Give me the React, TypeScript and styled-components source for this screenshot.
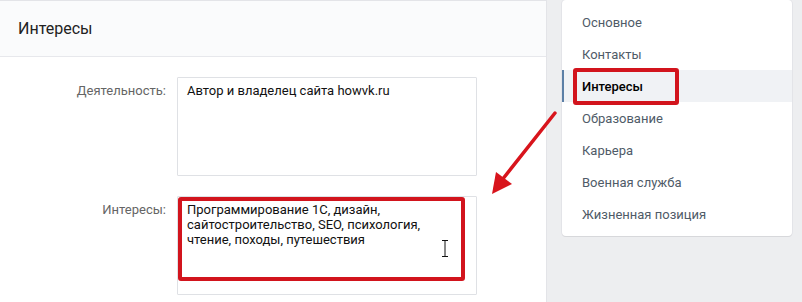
import styled, { createGlobalStyle } from 'styled-components';

const GlobalStyle = createGlobalStyle`
  html, body {
    margin: 0;
    padding: 0;
    background: #edeef0;
    font-family: Roboto, "Open Sans", "Liberation Sans", sans-serif;
    -webkit-font-smoothing: antialiased;
  }
`;

const Page = styled.div`
  position: relative;
  display: flex;
  align-items: flex-start;
  gap: 15px;
  width: 802px;
  height: 302px;
  overflow: hidden;
`;

const Card = styled.div`
  width: 547px;
  height: 302px;
  background: #fff;
  border-top: 1px solid #e3e4e8;
  border-right: 1px solid #e3e4e8;
  box-sizing: border-box;
`;

const Header = styled.div`
  height: 55px;
  display: flex;
  align-items: center;
  padding-left: 18px;
  background: #fafbfc;
  border-bottom: 1px solid #e7e8ec;
  font-size: 16px;
  color: #222;
`;

const Form = styled.div`
  display: flex;
  flex-direction: column;
  gap: 20px;
  padding-top: 20px;
`;

const Row = styled.div`
  display: flex;
  gap: 11px;
`;

const Label = styled.div`
  width: 166px;
  text-align: right;
  padding-top: 6px;
  font-size: 13px;
  color: #656565;
`;

const FieldWrap = styled.div`
  position: relative;
`;

const Field = styled.div`
  width: 300px;
  height: 99px;
  box-sizing: border-box;
  border: 1px solid #dfe1e5;
  border-radius: 1px;
  padding: 5px 9px;
  font-size: 13px;
  line-height: 15px;
  color: #111;
`;

const Highlight = styled.div<{ $w: number; $h: number; $l: number; $t: number }>`
  position: absolute;
  left: ${({ $l }) => $l}px;
  top: ${({ $t }) => $t}px;
  width: ${({ $w }) => $w}px;
  height: ${({ $h }) => $h}px;
  box-sizing: border-box;
  border: 4px solid #d2141d;
  border-radius: 3px;
  pointer-events: none;
`;

const Cursor = styled.svg`
  position: absolute;
  left: 264px;
  top: 44px;
`;

const Menu = styled.div`
  position: relative;
  width: 230px;
  margin-top: 0;
  padding: 6px 0;
  background: #fff;
  border-radius: 4px;
  box-shadow: 0 1px 0 0 #d7d8db, 0 0 0 1px #e3e4e8;
`;

const MenuItem = styled.div<{ $active?: boolean }>`
  height: 32px;
  display: flex;
  align-items: center;
  padding-left: 18px;
  font-size: 13px;
  color: ${({ $active }) => ($active ? '#000' : '#4f5b68')};
  font-weight: ${({ $active }) => ($active ? 500 : 400)};
  background: ${({ $active }) => ($active ? '#f0f2f5' : 'transparent')};
  border-left: 2px solid ${({ $active }) => ($active ? '#5b7fa6' : 'transparent')};
`;

const Arrow = styled.svg`
  position: absolute;
  left: 480px;
  top: 100px;
`;

const items = [
  'Основное',
  'Контакты',
  'Интересы',
  'Образование',
  'Карьера',
  'Военная служба',
  'Жизненная позиция',
];

export default function App() {
  return (
    <>
      <GlobalStyle />
      <Page>
        <Card>
          <Header>Интересы</Header>
          <Form>
            <Row>
              <Label>Деятельность:</Label>
              <Field>Автор и владелец сайта howvk.ru</Field>
            </Row>
            <Row>
              <Label>Интересы:</Label>
              <FieldWrap>
                <Field>
                  Программирование 1С, дизайн, сайтостроительство, SEO, психология, чтение, походы,
                  путешествия
                </Field>
                <Highlight $l={1} $t={1} $w={287} $h={84} />
                <Cursor width="8" height="17" viewBox="0 0 8 17">
                  <path d="M1 0.5h6M4 0.5v16M1 16.5h6" stroke="#111" strokeWidth="1" fill="none" />
                </Cursor>
              </FieldWrap>
            </Row>
          </Form>
        </Card>
        <Menu>
          {items.map((t) => (
            <MenuItem key={t} $active={t === 'Интересы'}>
              {t}
            </MenuItem>
          ))}
          <Highlight $l={11} $t={68} $w={106} $h={37} />
        </Menu>
        <Arrow width="90" height="100" viewBox="0 0 90 100">
          <line x1="75" y1="13" x2="22" y2="80" stroke="#d8141c" strokeWidth="3.5" strokeLinecap="round" />
          <polygon points="12,94 16,72 32,84" fill="#d8141c" />
        </Arrow>
      </Page>
    </>
  );
}
